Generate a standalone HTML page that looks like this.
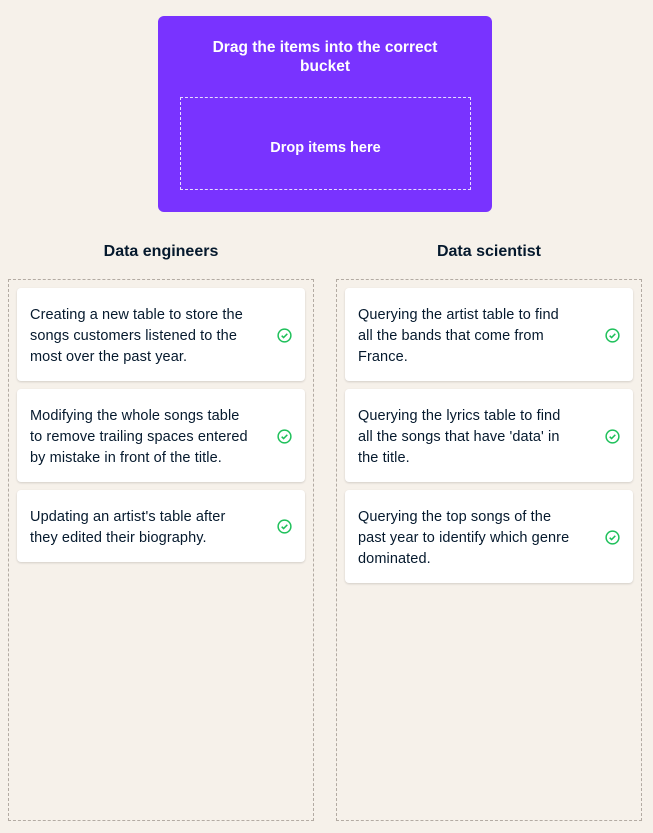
<!DOCTYPE html>
<html><head><meta charset="utf-8"><style>
*{box-sizing:border-box;margin:0;padding:0}
body{width:653px;height:833px;background:#f6f1ea;font-family:"Liberation Sans",sans-serif;color:#05192d;position:relative;overflow:hidden}
.top{position:absolute;left:158px;top:16px;width:334px;height:196px;background:#7933ff;border-radius:6px;color:#fff;text-align:center}
.top h1{font-size:15.5px;font-weight:bold;line-height:19px;margin-top:22px;padding:0 30px}
.drop{position:absolute;left:22px;top:81px;width:291px;height:93px;border:1px dashed #e8deff;display:flex;align-items:center;justify-content:center;font-size:14.5px;font-weight:bold;padding-top:8px}
.h{position:absolute;top:243px;font-size:16px;font-weight:bold;width:306px;text-align:center}
.col{position:absolute;top:279px;width:306px;height:542px;border:1px dashed #b3aba3}
.card{position:absolute;left:8px;width:288px;background:#fff;border-radius:4px;box-shadow:0 1px 2px rgba(0,0,0,.15);padding:3px 20px 0 13px;font-size:14.5px;line-height:21px;display:flex;align-items:center;white-space:nowrap;letter-spacing:0.1px}
.card svg{position:absolute;right:13px;top:50%;margin-top:-7px}
</style></head><body>
<div class="top"><h1>Drag the items into the correct bucket</h1><div class="drop">Drop items here</div></div>
<div class="h" style="left:8px">Data engineers</div>
<div class="h" style="left:336px">Data scientist</div>
<div class="col" style="left:8px">
<div class="card" style="top:8px;height:93px">Creating a new table to store the<br>songs customers listened to the<br>most over the past year.<svg width="15" height="15" viewBox="0 0 16 16"><circle cx="8" cy="8" r="6.8" fill="none" stroke="#1ec05a" stroke-width="1.6"/><path d="M5 8.2l2 2 4-4" fill="none" stroke="#1ec05a" stroke-width="1.6"/></svg></div>
<div class="card" style="top:109px;height:93px">Modifying the whole songs table<br>to remove trailing spaces entered<br>by mistake in front of the title.<svg width="15" height="15" viewBox="0 0 16 16"><circle cx="8" cy="8" r="6.8" fill="none" stroke="#1ec05a" stroke-width="1.6"/><path d="M5 8.2l2 2 4-4" fill="none" stroke="#1ec05a" stroke-width="1.6"/></svg></div>
<div class="card" style="top:210px;height:72px">Updating an artist's table after<br>they edited their biography.<svg width="15" height="15" viewBox="0 0 16 16"><circle cx="8" cy="8" r="6.8" fill="none" stroke="#1ec05a" stroke-width="1.6"/><path d="M5 8.2l2 2 4-4" fill="none" stroke="#1ec05a" stroke-width="1.6"/></svg></div>
</div>
<div class="col" style="left:336px">
<div class="card" style="top:8px;height:93px">Querying the artist table to find<br>all the bands that come from<br>France.<svg width="15" height="15" viewBox="0 0 16 16"><circle cx="8" cy="8" r="6.8" fill="none" stroke="#1ec05a" stroke-width="1.6"/><path d="M5 8.2l2 2 4-4" fill="none" stroke="#1ec05a" stroke-width="1.6"/></svg></div>
<div class="card" style="top:109px;height:93px">Querying the lyrics table to find<br>all the songs that have 'data' in<br>the title.<svg width="15" height="15" viewBox="0 0 16 16"><circle cx="8" cy="8" r="6.8" fill="none" stroke="#1ec05a" stroke-width="1.6"/><path d="M5 8.2l2 2 4-4" fill="none" stroke="#1ec05a" stroke-width="1.6"/></svg></div>
<div class="card" style="top:210px;height:93px">Querying the top songs of the<br>past year to identify which genre<br>dominated.<svg width="15" height="15" viewBox="0 0 16 16"><circle cx="8" cy="8" r="6.8" fill="none" stroke="#1ec05a" stroke-width="1.6"/><path d="M5 8.2l2 2 4-4" fill="none" stroke="#1ec05a" stroke-width="1.6"/></svg></div>
</div>
</body></html>
